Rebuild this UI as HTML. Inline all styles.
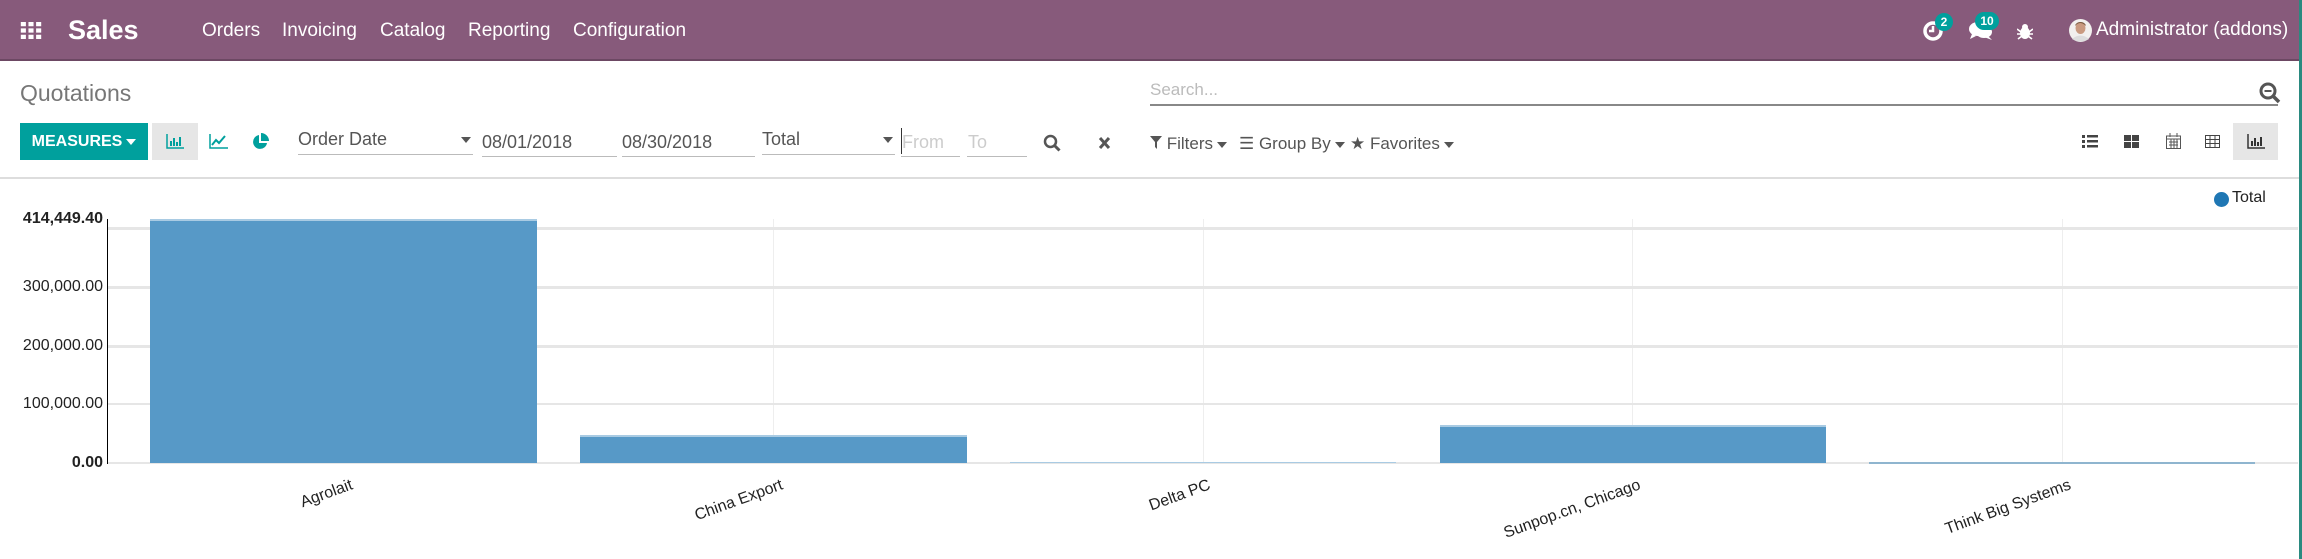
<!DOCTYPE html>
<html><head><meta charset="utf-8"><style>
*{margin:0;padding:0;box-sizing:border-box}
body{width:2302px;height:559px;overflow:hidden;background:#fff;font-family:"Liberation Sans",sans-serif;position:relative;color:#4c4c4c}
.a{position:absolute;white-space:nowrap}
#nav{left:0;top:0;width:2300px;height:61px;background:#875A7B;border-bottom:2px solid #6c4863}
.nv{color:#fff;font-size:19px;top:20px}
.tb{font-size:18px;color:#555}
.ul{border-bottom:1px solid #bbb;height:1px}
.car{display:inline-block;width:0;height:0;border-left:5px solid transparent;border-right:5px solid transparent;border-top:6px solid #555;vertical-align:middle;margin-left:4px}
.ylab{font-size:16px;color:#222;text-align:right;width:100px;left:3px}
.hg{left:108px;width:2190px;height:3px;background:#e6e6e6}
.vg{width:1px;background:#eee;top:219px;height:244px}
.bar{background:#5799c7;border-top:2px solid #a9cbe3}
.xl{font-size:16px;color:#222;transform-origin:100% 50%;transform:rotate(-20deg)}
</style></head><body>
<div class="a" id="nav"></div>
<svg class="a" style="left:20px;top:22px" width="22" height="17" viewBox="0 0 24 20" fill="#fff"><rect x="0" y="0" width="6" height="5"/><rect x="9" y="0" width="6" height="5"/><rect x="18" y="0" width="6" height="5"/><rect x="0" y="7.5" width="6" height="5"/><rect x="9" y="7.5" width="6" height="5"/><rect x="18" y="7.5" width="6" height="5"/><rect x="0" y="15" width="6" height="5"/><rect x="9" y="15" width="6" height="5"/><rect x="18" y="15" width="6" height="5"/></svg>
<div class="a" style="left:68px;top:15px;color:#fff;font-size:27px;font-weight:bold">Sales</div>
<div class="a nv" style="left:202px">Orders</div>
<div class="a nv" style="left:282px">Invoicing</div>
<div class="a nv" style="left:380px">Catalog</div>
<div class="a nv" style="left:468px">Reporting</div>
<div class="a nv" style="left:573px">Configuration</div>
<svg class="a" style="left:1922px;top:20px" width="22" height="22" viewBox="0 0 22 22"><circle cx="11" cy="11" r="8" fill="none" stroke="#fff" stroke-width="3.5"/><path d="M11 6v5h-4" stroke="#fff" stroke-width="2.5" fill="none"/></svg>
<div class="a" style="left:1935px;top:13px;width:18px;height:18px;border-radius:9px;background:#00A09D;color:#fff;font-size:12px;font-weight:bold;text-align:center;line-height:18px">2</div>
<svg class="a" style="left:1968px;top:20px" width="26" height="22" viewBox="0 0 26 22" fill="#fff"><ellipse cx="10" cy="9" rx="9" ry="7"/><path d="M4 14l-2 5 6-3z"/><ellipse cx="16" cy="12" rx="8" ry="6"/><path d="M20 16l4 4-8-3z"/></svg>
<div class="a" style="left:1975px;top:12px;width:24px;height:18px;border-radius:9px;background:#00A09D;color:#fff;font-size:12px;font-weight:bold;text-align:center;line-height:18px">10</div>
<svg class="a" style="left:2017px;top:23px" width="16" height="17" viewBox="0 0 16 17" fill="#fff"><ellipse cx="8" cy="10" rx="5" ry="6"/><circle cx="8" cy="4" r="3"/><path d="M0 6l4 3M16 6l-4 3M0 11h4M16 11h-4M1 16l4-3M15 16l-4-3" stroke="#fff" stroke-width="1.6"/></svg>
<svg class="a" style="left:2069px;top:19px" width="23" height="23" viewBox="0 0 23 23"><circle cx="11.5" cy="11.5" r="11.5" fill="#f2f0ee"/><ellipse cx="11.5" cy="9" rx="5" ry="6" fill="#c99a80"/><path d="M6 7q5-6 11 0q-1-4-5.5-4T6 7z" fill="#7a5a40"/><path d="M3 20q8.5-7 17 0q-8.5 5-17 0z" fill="#ddd"/></svg>
<div class="a nv" style="left:2096px;top:19px;font-size:19px">Administrator (addons)</div>
<div class="a" style="left:2299px;top:0;width:3px;height:559px;background:#2a8a80"></div>

<div class="a" style="left:20px;top:80px;font-size:23px;color:#777">Quotations</div>
<div class="a" style="left:1150px;top:80px;font-size:17px;color:#bbb">Search...</div>
<div class="a" style="left:1150px;top:104px;width:1128px;height:2px;background:#888"></div>
<svg class="a" style="left:2259px;top:82px" width="22" height="22" viewBox="0 0 22 22"><circle cx="9" cy="9" r="7" fill="none" stroke="#555" stroke-width="3"/><path d="M14 14l6 6" stroke="#555" stroke-width="3.5"/><path d="M5.5 9h7" stroke="#555" stroke-width="2"/></svg>

<div class="a" style="left:20px;top:123px;width:128px;height:37px;background:#00A09D;color:#fff;font-size:16px;font-weight:bold;line-height:37px;text-align:center">MEASURES<span class="car" style="border-top-color:#fff"></span></div>
<div class="a" style="left:152px;top:123px;width:46px;height:37px;background:#e6e6e6"></div>
<svg class="a" style="left:166px;top:134px" width="18" height="15" viewBox="0 0 18 15"><path d="M1 0v14h17" stroke="#00A09D" stroke-width="1.5" fill="none"/><path d="M5 12V7M8 12V4M11 12V8M14 12V3" stroke="#00A09D" stroke-width="2"/></svg>
<svg class="a" style="left:209px;top:134px" width="19" height="15" viewBox="0 0 19 15"><path d="M1 0v14h18" stroke="#00A09D" stroke-width="1.5" fill="none"/><path d="M3 11l4-5 3 3 6-7" stroke="#00A09D" stroke-width="2" fill="none"/></svg>
<svg class="a" style="left:252px;top:133px" width="17" height="17" viewBox="0 0 17 17"><path d="M7 2A7 7 0 1 0 15 10H7z" fill="#00A09D"/><path d="M9 0v8h8A8 8 0 0 0 9 0z" fill="#00A09D"/></svg>
<div class="a tb" style="left:298px;top:129px">Order Date</div><div class="a ul" style="left:298px;top:154px;width:175px"></div><span class="a car" style="left:457px;top:137px"></span>
<div class="a tb" style="left:482px;top:132px">08/01/2018</div><div class="a ul" style="left:482px;top:156px;width:135px"></div>
<div class="a tb" style="left:622px;top:132px">08/30/2018</div><div class="a ul" style="left:622px;top:156px;width:133px"></div>
<div class="a tb" style="left:762px;top:129px">Total</div><div class="a ul" style="left:762px;top:154px;width:133px"></div><span class="a car" style="left:879px;top:137px"></span>
<div class="a" style="left:901px;top:128px;width:1px;height:26px;background:#333"></div>
<div class="a tb" style="left:902px;top:132px;color:#ccc">From</div><div class="a ul" style="left:901px;top:156px;width:59px"></div>
<div class="a tb" style="left:968px;top:132px;color:#ccc">To</div><div class="a ul" style="left:967px;top:156px;width:60px"></div>
<svg class="a" style="left:1043px;top:134px" width="18" height="18" viewBox="0 0 18 18"><circle cx="7.5" cy="7.5" r="5.5" fill="none" stroke="#555" stroke-width="2.5"/><path d="M11.5 11.5l5 5" stroke="#555" stroke-width="3"/></svg>
<svg class="a" style="left:1098px;top:136px" width="13" height="14" viewBox="0 0 13 14"><path d="M2 2l9 10M11 2l-9 10" stroke="#555" stroke-width="3"/></svg>
<div class="a" style="left:1150px;top:134px;font-size:17px;color:#555"><svg width="12" height="13" viewBox="0 0 12 13"><path d="M0 0h12L7 6v7L5 11V6z" fill="#555"/></svg> Filters<span class="car"></span></div>
<div class="a" style="left:1239px;top:134px;font-size:17px;color:#555">☰ Group By<span class="car"></span></div>
<div class="a" style="left:1350px;top:134px;font-size:17px;color:#555">★ Favorites<span class="car"></span></div>
<svg class="a" style="left:2082px;top:135px" width="16" height="13" viewBox="0 0 16 13" fill="#444"><rect x="0" y="0" width="3" height="3"/><rect x="0" y="5" width="3" height="3"/><rect x="0" y="10" width="3" height="3"/><rect x="5" y="0" width="11" height="2.5"/><rect x="5" y="5" width="11" height="2.5"/><rect x="5" y="10" width="11" height="2.5"/></svg>
<svg class="a" style="left:2124px;top:135px" width="15" height="13" viewBox="0 0 15 13" fill="#444"><rect x="0" y="0" width="7" height="6"/><rect x="8" y="0" width="7" height="6"/><rect x="0" y="7" width="7" height="6"/><rect x="8" y="7" width="7" height="6"/></svg>
<svg class="a" style="left:2166px;top:133px" width="15" height="16" viewBox="0 0 15 16"><rect x="0.5" y="3" width="14" height="12.5" fill="none" stroke="#555"/><path d="M0 6h15M4 0v4M11 0v4M3 9h9M3 12h9M5 6v10M8 6v10M11 6v10" stroke="#555" stroke-width="1"/></svg>
<svg class="a" style="left:2205px;top:135px" width="15" height="13" viewBox="0 0 15 13"><rect x="0.5" y="0.5" width="14" height="12" fill="none" stroke="#444"/><path d="M0 4.5h15M0 8.5h15M5 0v13M10 0v13" stroke="#444"/></svg>
<div class="a" style="left:2233px;top:123px;width:45px;height:37px;background:#e6e6e6"></div>
<svg class="a" style="left:2247px;top:134px" width="18" height="15" viewBox="0 0 18 15"><path d="M1 0v14h17" stroke="#333" stroke-width="1.5" fill="none"/><path d="M5 12V7M8 12V4M11 12V8M14 12V3" stroke="#333" stroke-width="2"/></svg>
<div class="a" style="left:0;top:177px;width:2299px;height:2px;background:#ddd"></div>

<div class="a" style="left:2214px;top:192px;width:15px;height:15px;border-radius:50%;background:#1f77b4"></div>
<div class="a" style="left:2232px;top:189px;font-size:16px;color:#222">Total</div>

<div class="a vg" style="left:343px"></div>
<div class="a vg" style="left:773px"></div>
<div class="a vg" style="left:1203px"></div>
<div class="a vg" style="left:1632px"></div>
<div class="a vg" style="left:2062px"></div>
<div class="a hg" style="top:227px"></div>
<div class="a hg" style="top:286px"></div>
<div class="a hg" style="top:345px"></div>
<div class="a hg" style="top:403px;height:2px"></div>
<div class="a hg" style="top:462px;height:2px"></div>
<div class="a" style="left:107px;top:219px;width:1px;height:245px;background:#000"></div>
<div class="a ylab" style="top:210px;font-weight:bold">414,449.40</div>
<div class="a ylab" style="top:278px">300,000.00</div>
<div class="a ylab" style="top:337px">200,000.00</div>
<div class="a ylab" style="top:395px">100,000.00</div>
<div class="a ylab" style="top:454px;font-weight:bold">0.00</div>

<div class="a bar" style="left:150px;top:219px;width:387px;height:244px"></div>
<div class="a bar" style="left:580px;top:435px;width:387px;height:28px"></div>
<div class="a" style="left:1010px;top:462px;width:386px;height:1px;background:#a9cbe3"></div>
<div class="a bar" style="left:1440px;top:425px;width:386px;height:38px"></div>
<div class="a" style="left:1869px;top:462px;width:386px;height:2px;background:#8fb5cf"></div>

<div class="a xl" style="right:1950px;top:476px">Agrolait</div>
<div class="a xl" style="right:1520px;top:476px">China Export</div>
<div class="a xl" style="right:1092px;top:476px">Delta PC</div>
<div class="a xl" style="right:662px;top:476px">Sunpop.cn, Chicago</div>
<div class="a xl" style="right:232px;top:476px">Think Big Systems</div>
</body></html>
